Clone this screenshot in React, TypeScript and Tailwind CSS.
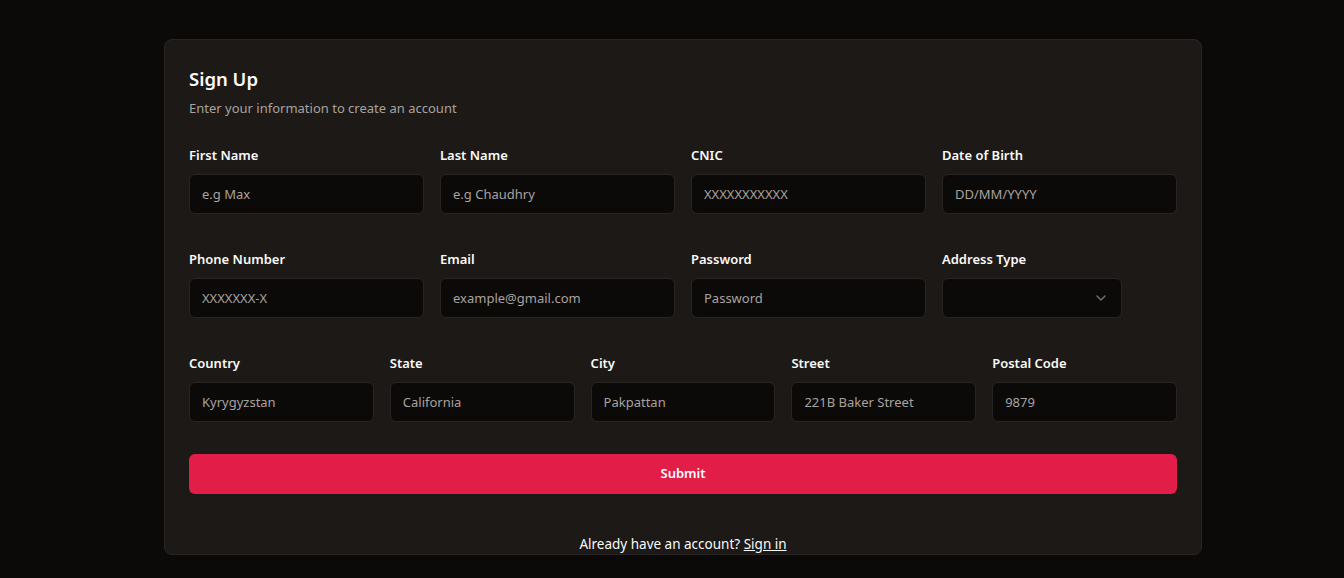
import { ChevronDown } from 'lucide-react'

type FieldProps = {
  label: string
  placeholder: string
  type?: string
}

function Field({ label, placeholder, type = 'text' }: FieldProps) {
  return (
    <div className="flex flex-col gap-[9px]">
      <label className="text-[13px] font-semibold text-[#fafaf9] leading-5">{label}</label>
      <input
        type={type}
        placeholder={placeholder}
        className="h-10 w-full rounded-md border border-[#292524] bg-[#0c0a09] px-3 text-[13px] text-[#a8a29e] placeholder:text-[#a8a29e] outline-none"
      />
    </div>
  )
}

export default function App() {
  return (
    <div className="min-h-[578px] bg-[#0c0a09] pt-[39px] font-['Noto_Sans',sans-serif]">
      <div className="ml-[164px] w-[1038px] rounded-lg border border-[#292524] bg-[#1c1917] text-[#fafaf9]">
        {/* header */}
        <div className="px-6 pt-[25px]">
          <h1 className="text-[18.5px] font-semibold leading-7">Sign Up</h1>
          <p className="mt-[5px] text-[13px] leading-5 text-[#a8a29e]">Enter your information to create an account</p>
        </div>

        <div className="flex flex-col gap-[35px] px-6 pt-[27px]">
          <div className="grid grid-cols-4 gap-4">
            <Field label="First Name" placeholder="e.g Max" />
            <Field label="Last Name" placeholder="e.g Chaudhry" />
            <Field label="CNIC" placeholder="XXXXXXXXXXX" />
            <Field label="Date of Birth" placeholder="DD/MM/YYYY" />
          </div>

          <div className="grid grid-cols-4 gap-4">
            <Field label="Phone Number" placeholder="XXXXXXX-X" />
            <Field label="Email" placeholder="example@gmail.com" type="email" />
            <Field label="Password" placeholder="Password" type="password" />
            <div className="flex flex-col gap-[9px]">
              <label className="text-[13px] font-semibold leading-5">Address Type</label>
              <button className="flex h-10 w-[180px] items-center justify-end rounded-md border border-[#292524] bg-[#0c0a09] px-3">
                <ChevronDown className="h-4 w-4 text-[#78716c]" />
              </button>
            </div>
          </div>

          <div className="grid grid-cols-5 gap-4">
            <Field label="Country" placeholder="Kyrygyzstan" />
            <Field label="State" placeholder="California" />
            <Field label="City" placeholder="Pakpattan" />
            <Field label="Street" placeholder="221B Baker Street" />
            <Field label="Postal Code" placeholder="9879" />
          </div>
        </div>

        <div className="px-6 pt-8">
          <button className="h-10 w-full rounded-md bg-[#e11d48] text-[13px] font-semibold text-white">Submit</button>
        </div>

        <div className="pt-10 text-center text-[13.5px] leading-5">
          Already have an account? <a className="underline">Sign in</a>
        </div>
      </div>
    </div>
  )
}
